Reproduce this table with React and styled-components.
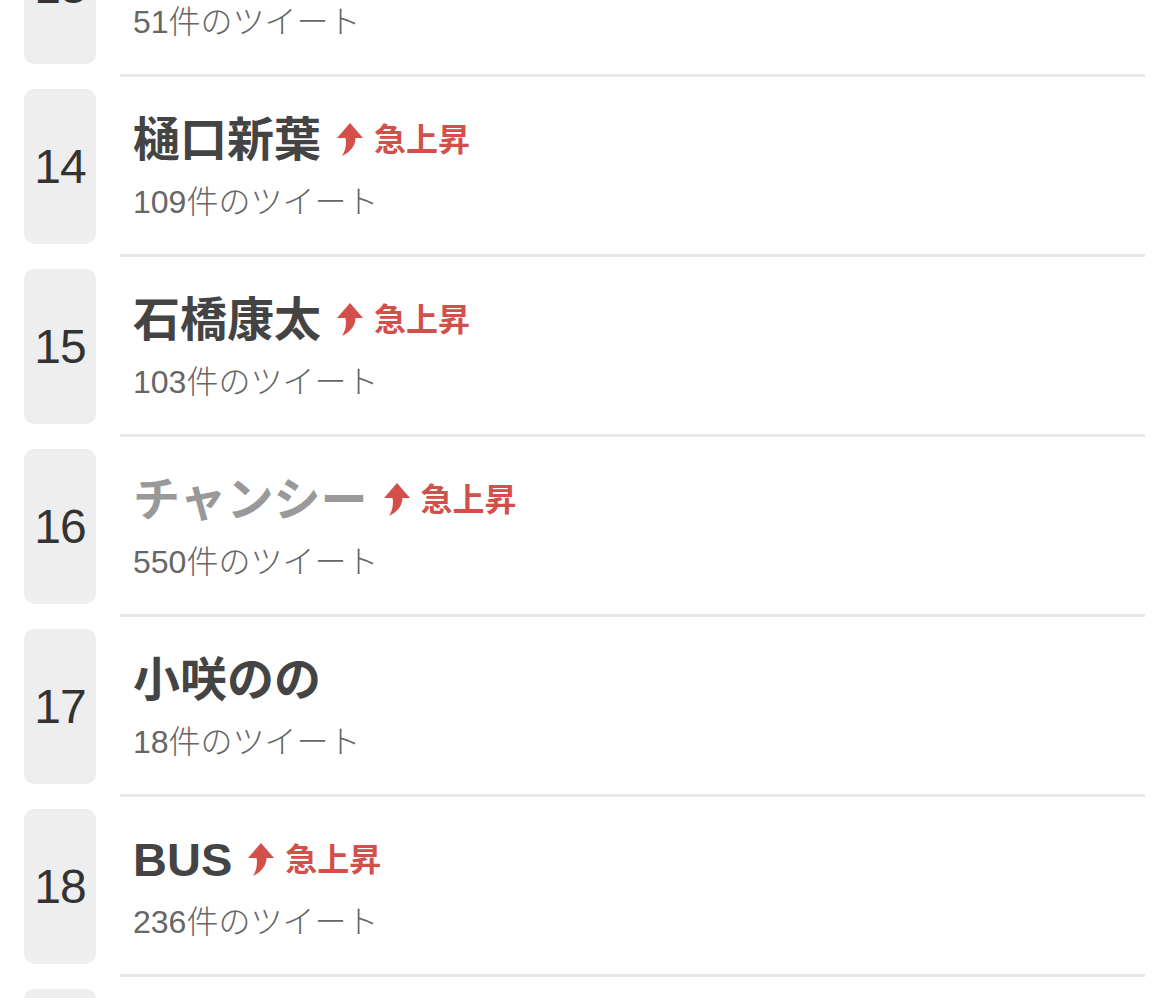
import React from 'react'
import styled, { createGlobalStyle } from 'styled-components'

const GlobalStyle = createGlobalStyle`
  html, body {
    margin: 0;
    padding: 0;
    background: #fff;
    overflow: hidden;
  }
  body {
    font-family: "Liberation Sans", "Noto Sans CJK JP", sans-serif;
  }
`

const trends = [
  { rank: 13, name: '本田真凜', count: 51 },
  { rank: 14, name: '樋口新葉', count: 109, rising: true },
  { rank: 15, name: '石橋康太', count: 103, rising: true },
  { rank: 16, name: 'チャンシー', count: 550, rising: true, visited: true },
  { rank: 17, name: '小咲のの', count: 18 },
  { rank: 18, name: 'BUS', count: 236, rising: true },
  { rank: 19, name: '', count: 0 },
]

function RisingIcon() {
  return (
    <svg width="26" height="33" viewBox="0 0 26 33">
      <path
        d="M13 0 L26 15 L18.5 15 C18.5 23 13 29 5 33 C9 27 9.5 20 8.5 15 L0 15 Z"
        fill="#d3504a"
      />
    </svg>
  )
}

function App() {
  return (
    <>
      <GlobalStyle />
      <List>
        {trends.map((t) => (
          <Row key={t.rank}>
            <RankBox>{t.rank}</RankBox>
            <Body>
              <Info>
                <TitleLine>
                  <Title $visited={t.visited}>{t.name}</Title>
                  {t.rising && (
                    <Badge>
                      <RisingIcon />
                      <span>急上昇</span>
                    </Badge>
                  )}
                </TitleLine>
                <Count>{t.count}件のツイート</Count>
              </Info>
            </Body>
          </Row>
        ))}
      </List>
    </>
  )
}

const List = styled.div`
  display: flex;
  flex-direction: column;
  /* scrolled list: row 13 is cut off at the top */
  margin-top: -103px;
`

const Row = styled.div`
  display: flex;
  gap: 24px;
  padding: 12px 25px 0 24px;
`

const RankBox = styled.div`
  width: 72px;
  height: 155px;
  flex-shrink: 0;
  border-radius: 10px;
  background: #eeeeee;
  display: flex;
  align-items: center;
  justify-content: center;
  font-size: 48px;
  color: #333;
  letter-spacing: -1px;
`

const Body = styled.div`
  flex: 1;
  padding-bottom: 10px;
  border-bottom: 3px solid #e8e8e8;
`

const Info = styled.div`
  height: 155px;
  box-sizing: border-box;
  padding: 23px 0 0 13px;
  display: flex;
  flex-direction: column;
  gap: 14px;
`

const TitleLine = styled.div`
  display: flex;
  align-items: center;
  height: 56px;
  gap: 16px;
`

const Title = styled.div`
  font-size: 47px;
  font-weight: bold;
  line-height: 56px;
  color: ${(p) => (p.$visited ? '#999' : '#444')};
`

const Badge = styled.div`
  display: flex;
  align-items: center;
  gap: 11px;
  color: #d3504a;
  font-size: 32px;
  font-weight: bold;
  margin-top: -6px;
  svg {
    margin-top: 4px;
  }
`

const Count = styled.div`
  font-size: 32px;
  line-height: 40px;
  color: #666;
  font-weight: 300;
`

export default App
